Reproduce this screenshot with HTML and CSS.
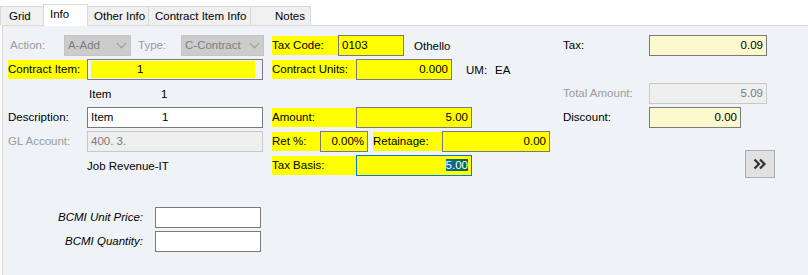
FILE: index.html
```html
<!DOCTYPE html>
<html>
<head>
<title>Contract Item</title>
<link rel="stylesheet" href="styles.css">
</head>
<body>
<div class="tabs">
  <div class="tab tab-grid">Grid</div>
  <div class="tab active">Info</div>
  <div class="tab tab-other">Other Info</div>
  <div class="tab tab-cii">Contract Item Info</div>
  <div class="tab tab-notes">Notes</div>
</div>
<div class="panel">
  <div class="cols">
    <div class="col col-left">
      <div class="row">
        <span class="lbl dis w-action">Action:</span>
        <div class="sel w-add">A-Add<span class="chev"></span></div>
        <span class="lbl dis w-type">Type:</span>
        <div class="sel w-ctr">C-Contract<span class="chev"></span></div>
      </div>
      <div class="row">
        <span class="lbl hl w-l">Contract Item:</span>
        <div class="fld w-lf"><span class="mark mark-ci">1</span></div>
      </div>
      <div class="row">
        <span class="txt w-l"></span>
        <span class="txt w-item">Item</span><span class="txt">1</span>
      </div>
      <div class="row">
        <span class="lbl w-l">Description:</span>
        <div class="fld white w-lf"><span class="w-item2">Item</span>1</div>
      </div>
      <div class="row">
        <span class="lbl dis w-l">GL Account:</span>
        <div class="fld off w-lf">400. 3.</div>
      </div>
      <div class="row">
        <span class="txt w-l"></span>
        <span class="txt">Job Revenue-IT</span>
      </div>
    </div>

    <div class="col col-mid">
      <div class="row">
        <span class="lbl hl w-tc">Tax Code:</span>
        <div class="fld hlf w-tcf">0103</div>
        <span class="txt othello">Othello</span>
      </div>
      <div class="row">
        <span class="lbl hl w-m">Contract Units:</span>
        <div class="fld hlf num w-cu">0.000</div>
        <span class="txt um">UM:</span><span class="txt">EA</span>
      </div>
      <div class="row"></div>
      <div class="row">
        <span class="lbl hl w-m">Amount:</span>
        <div class="fld hlf num w-mf">5.00</div>
      </div>
      <div class="row">
        <span class="lbl hl w-ret">Ret %:</span>
        <div class="fld hlf num w-retf">0.00%</div>
        <span class="lbl hl w-rtn">Retainage:</span>
        <div class="fld hlf num w-rtnf">0.00</div>
      </div>
      <div class="row">
        <span class="lbl hl w-m">Tax Basis:</span>
        <div class="fld hlf num focus w-mf"><span class="selected">5.00</span></div>
      </div>
    </div>

    <div class="col col-right">
      <div class="row">
        <span class="lbl w-r">Tax:</span>
        <div class="fld cream num w-rf">0.09</div>
      </div>
      <div class="row"></div>
      <div class="row">
        <span class="lbl dis w-r">Total Amount:</span>
        <div class="fld off num w-rf">5.09</div>
      </div>
      <div class="row">
        <span class="lbl w-r">Discount:</span>
        <div class="fld cream num w-disc">0.00</div>
      </div>
      <div class="more">
        <svg width="14" height="12" viewBox="0 0 14 12"><path d="M1.5 1.5 L6 6 L1.5 10.5 M7 1.5 L11.5 6 L7 10.5" fill="none" stroke="#333" stroke-width="2.2"/></svg>
      </div>
    </div>
  </div>

  <div class="bcmi">
    <div class="row">
      <span class="lbl it">BCMI Unit Price:</span>
      <div class="fld white w-b"></div>
    </div>
    <div class="row">
      <span class="lbl it">BCMI Quantity:</span>
      <div class="fld white w-b"></div>
    </div>
  </div>
</div>
</body>
</html>
```

FILE: styles.css
```css
*{
  box-sizing: border-box;
}
body {
  margin: 0;
  font-family: "Liberation Sans", Arial, sans-serif;
  font-size: 11.5px;
  color: #000;
  background: #fff;
  overflow: hidden;
}
.tabs {
  display: flex;
  align-items: flex-end;
  height: 25px;
  padding-left: 0;
}
.tab {
  height: 19px;
  padding: 3px 6px 0;
  background: #f0f0f0;
  border: 1px solid #d9d9d9;
  border-bottom: none;
  margin-left: -1px;
  white-space: nowrap;
}
.tab-grid {
  width: 44px;
  margin-left: 0;
  padding-left: 8px;
}
.tab.active {
  height: 22px;
  width: 45px;
  background: #fff;
  padding-top: 3px;
  position: relative;
  top: 1px;
}
.tab-other { width: 62px; }
.tab-cii { width: 103px; }
.tab-notes {
  width: 61px;
  text-align: right;
  padding-right: 5px;
}
.panel {
  height: 250px;
  background: #eff3f7;
  border-top: 1px solid #d9d9d9;
  border-left: 1px solid #d9d9d9;
  margin-left: 2px;
  padding: 9px 0 0 5px;
}
.cols {
  display: flex;
}
.col {
  display: flex;
  flex-direction: column;
  gap: 3px;
}
.col-left { width: 264px; }
.col-mid { width: 291px; }
.col-right { width: 215px; }
.row {
  display: flex;
  align-items: center;
  height: 21px;
}
.lbl, .txt {
  white-space: nowrap;
  flex: none;
}
.lbl {
  height: 19px;
  line-height: 19px;
}
.dis { color: #9a9a9a; }
.hl { background: #ffff00; }
.it {
  font-style: italic;
  width: 135px;
  text-align: right;
  margin-right: 12px;
}
.fld {
  height: 21px;
  line-height: 19px;
  border: 1px solid #7a7a7a;
  padding: 0 3px;
  flex: none;
  white-space: nowrap;
  overflow: hidden;
}
.fld.white { background: #fff; }
.fld.off {
  background: #efefef;
  border-color: #c8c8c8;
  color: #7a7a7a;
}
.fld.cream { background: #fdf9cf; }
.fld.hlf { background: #ffff00; }
.fld.num { text-align: right; }
.fld.focus { border-color: #0078d7; }
.selected {
  background: linear-gradient(90deg, #0b68b5, #0b6b2c);
  color: #fff;
}
.mark {
  display: block;
  background: #ffff00;
  margin: 1px 4px 0 0;
  padding-left: 46px;
  height: 17px;
  line-height: 17px;
}
.sel {
  position: relative;
  height: 21px;
  line-height: 19px;
  padding: 0 3px;
  background: #cccccc;
  border: 1px solid #c4c4c4;
  color: #7d7d7d;
  flex: none;
}
.chev {
  position: absolute;
  right: 5px;
  top: 4px;
  width: 7px;
  height: 7px;
  border-right: 1px solid #9a9a9a;
  border-bottom: 1px solid #9a9a9a;
  transform: rotate(45deg);
}
.w-action { width: 56px; padding-left: 2px; }
.w-add { width: 67px; }
.w-type { width: 43px; margin-left: 7px; }
.w-ctr { width: 83px; }
.w-l { width: 79px; }
.w-lf { width: 176px; }
.w-item { width: 72px; margin-left: 2px; }
.w-item2 { display: inline-block; width: 71px; }
.w-tc { width: 66px; }
.w-tcf { width: 66px; }
.othello { margin-left: 10px; }
.w-m { width: 84px; }
.w-mf { width: 116px; }
.w-cu { width: 96px; }
.um { margin-left: 14px; width: 29px; }
.w-ret { width: 48px; }
.w-retf { width: 48px; }
.w-rtn { width: 69px; margin-left: 5px; }
.w-rtnf { width: 108px; }
.w-r { width: 86px; }
.w-rf { width: 118px; }
.w-disc { width: 92px; }
.more {
  width: 30px;
  height: 28px;
  margin: 19px 0 0 182px;
  background: #e1e1e1;
  border: 1px solid #adadad;
  display: flex;
  align-items: center;
  justify-content: center;
}
.bcmi {
  display: flex;
  flex-direction: column;
  gap: 3px;
  margin-top: 29px;
}
.w-b { width: 106px; }
```
